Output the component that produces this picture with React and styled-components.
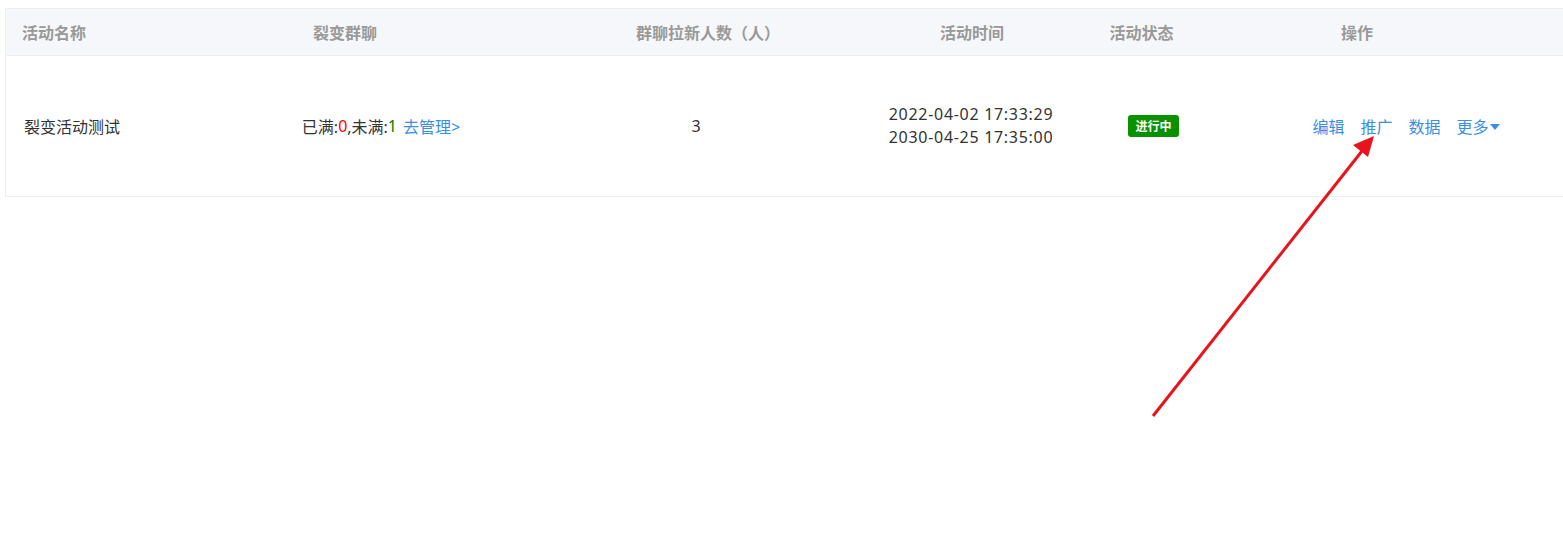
import React from "react";
import styled, { createGlobalStyle } from "styled-components";

const GlobalStyle = createGlobalStyle`
  html, body {
    margin: 0;
    background: #fff;
    overflow: hidden;
  }
  body {
    font-family: "Noto Sans", "Noto Sans CJK SC", sans-serif;
  }
`;

const Page = styled.div`
  position: relative;
  width: 1563px;
  height: 537px;
  padding: 8px 0 0 5px;
  box-sizing: border-box;
  overflow: hidden;
`;

const Table = styled.div`
  width: 1620px;
  border: 1px solid #ebeef5;
  box-sizing: border-box;
`;

const Row = styled.div`
  display: grid;
  grid-template-columns: 195px 360px 270px 280px 85px 1fr;
  height: ${(p) => (p.$head ? "46px" : "140px")};
  background: ${(p) => (p.$head ? "#f5f7fa" : "#fff")};
  border-bottom: ${(p) => (p.$head ? "1px solid #ebeef5" : "none")};
`;

const Cell = styled.div`
  display: flex;
  align-items: center;
  justify-content: ${(p) => (p.$left ? "flex-start" : "center")};
  padding-left: ${(p) => p.$pl || 0}px;
  padding-right: ${(p) => p.$pr || 0}px;
  font-size: 16px;
  color: ${(p) => (p.$head ? "#999" : "#333")};
  font-weight: ${(p) => (p.$head ? 700 : 400)};
  white-space: nowrap;
`;

const Red = styled.span`
  color: #f00;
`;

const Green = styled.span`
  color: #008000;
`;

const Link = styled.span`
  color: #3a8ee6;
  cursor: pointer;
  margin-left: ${(p) => p.$ml || 0}px;
  display: inline-flex;
  align-items: center;
`;

const Dates = styled.div`
  display: flex;
  flex-direction: column;
  align-items: center;
  line-height: 23px;
  letter-spacing: 0.7px;
  color: #333;
`;

const Badge = styled.span`
  display: inline-flex;
  align-items: center;
  justify-content: center;
  width: 51px;
  height: 22px;
  border-radius: 3px;
  background: #0a9100;
  color: #fff;
  font-size: 12px;
  font-weight: 700;
`;

const Actions = styled.div`
  display: flex;
  align-items: center;
  gap: 16px;
`;

const Caret = styled.span`
  display: inline-block;
  width: 0;
  height: 0;
  border-left: 5px solid transparent;
  border-right: 5px solid transparent;
  border-top: 6px solid #3a8ee6;
  margin-left: 1px;
  margin-top: 2px;
`;

const ArrowLayer = styled.svg`
  position: absolute;
  left: 0;
  top: 0;
  pointer-events: none;
`;

const heads = [
  { label: "活动名称", left: true, pl: 16 },
  { label: "裂变群聊", pr: 72 },
  { label: "群聊拉新人数（人）", pl: 24 },
  { label: "活动时间", pl: 2 },
  { label: "活动状态", pr: 24 },
  { label: "操作", pr: 106 },
];

export default function App() {
  return (
    <>
      <GlobalStyle />
      <Page>
        <Table>
          <Row $head>
            {heads.map((h) => (
              <Cell key={h.label} $head $left={h.left} $pl={h.pl} $pr={h.pr}>
                {h.label}
              </Cell>
            ))}
          </Row>
          <Row>
            <Cell $left $pl={18}>
              裂变活动测试
            </Cell>
            <Cell>
              已满:<Red>0</Red>,未满:<Green>1</Green>
              <Link $ml={6}>去管理&gt;</Link>
            </Cell>
            <Cell>3</Cell>
            <Cell>
              <Dates>
                <span>2022-04-02 17:33:29</span>
                <span>2030-04-25 17:35:00</span>
              </Dates>
            </Cell>
            <Cell>
              <Badge>进行中</Badge>
            </Cell>
            <Cell $pr={8}>
              <Actions>
                <Link>编辑</Link>
                <Link>推广</Link>
                <Link>数据</Link>
                <Link>
                  更多
                  <Caret />
                </Link>
              </Actions>
            </Cell>
          </Row>
        </Table>
        <ArrowLayer width="1563" height="537" viewBox="0 0 1563 537">
          <line x1="1153" y1="416" x2="1362" y2="151" stroke="#e8141c" strokeWidth="3" />
          <polygon points="1374,136 1353,145 1368,157" fill="#e8141c" />
        </ArrowLayer>
      </Page>
    </>
  );
}
